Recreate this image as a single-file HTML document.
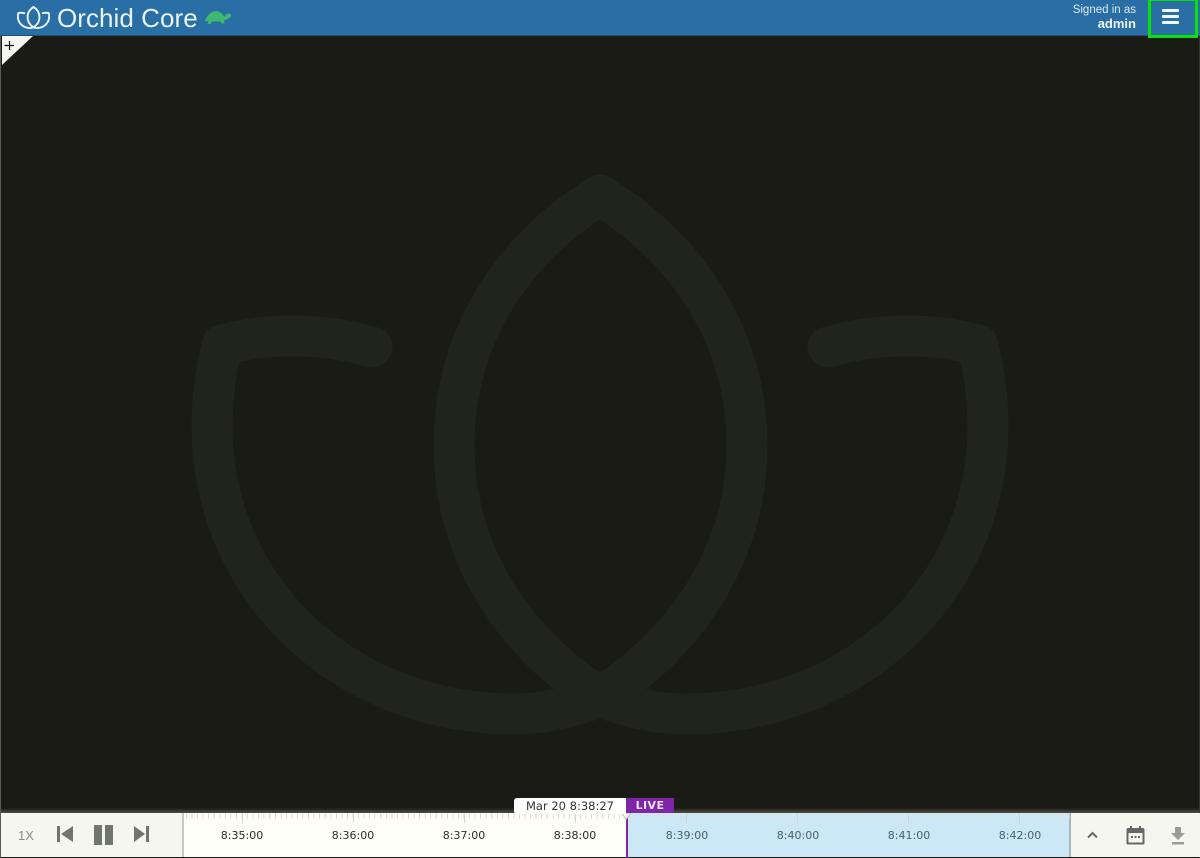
<!DOCTYPE html>
<html><head><meta charset="utf-8"><title>Orchid Core</title>
<style>
html,body{margin:0;padding:0;width:1200px;height:858px;overflow:hidden;background:#191b14;font-family:"Liberation Sans",sans-serif}
.a{position:absolute}
#hd{left:0;top:0;width:1200px;height:35px;background:#2a6ea6;border-bottom:1px solid #1d4f78;box-sizing:content-box}
#title{left:57px;top:1px;font-size:26px;line-height:34px;color:#e8f4f6;white-space:nowrap;letter-spacing:.05px}
#signed{right:64px;top:3px;text-align:right;font-size:11.5px;line-height:14px;color:#dbe9f0}
#signed b{font-size:13px;display:block;color:#f0f6f8}
#box{left:1148px;top:0;width:50px;height:38px;border:3px solid #08e008;box-sizing:border-box;border-top-width:1px}
.bar{left:1162px;width:17px;height:3px;background:#f2f6f4;border-radius:1px}
#ctl{left:1px;top:813px;width:182px;height:44px;background:#f5f7ef}
#tl{left:184px;top:813px;width:442px;height:44px;background:#fffff8}
#tb{left:628px;top:813px;width:442px;height:44px;background:#cce8f7}
#rc{left:1071px;top:813px;width:129px;height:44px;background:#f5f7ef}
.t{top:829px;width:80px;text-align:center;font:11px/14px "DejaVu Sans",sans-serif;color:#2c2c2c}
.b{color:#4c5c70}
.tick{top:813px;height:6px;left:184px;width:886px;background:repeating-linear-gradient(90deg,#dfdfd6 0,#dfdfd6 1px,transparent 1px,transparent 5.55px);background-position:2px 0}
.maj{top:813px;width:1px;height:10px;background:#d4d4cc}
</style></head><body>
<svg class="a" style="left:0;top:0" width="1200" height="858" viewBox="0 0 1200 858">
<g fill="none" stroke="#21241c" stroke-width="41" stroke-linecap="round" stroke-linejoin="round">
<path d="M372,347 C322,333 272,332 222,345 C216,372 212,398 212,425 C212,590 345,714 515,714 C545,714 575,706 600,697 C690,640 747,550 747,445 C747,340 690,250 600,195"/>
<path d="M828,347 C878,333 928,332 978,345 C984,372 988,398 988,425 C988,590 855,714 685,714 C655,714 625,706 600,697 C510,640 454,550 454,445 C454,340 510,250 600,195"/>
</g></svg>
<div class="a" style="left:0;top:36px;width:1px;height:822px;background:#5a5a5a"></div>
<div class="a" style="left:1199px;top:36px;width:1px;height:822px;background:#333"></div>

<div class="a" id="hd"></div>
<svg class="a" style="left:17px;top:6px" width="33" height="23" viewBox="192 173 816 560">
<g fill="none" stroke="#e8f4f6" stroke-width="48" stroke-linecap="round" stroke-linejoin="round">
<path d="M372,347 C322,333 272,332 222,345 C216,372 212,398 212,425 C212,590 345,714 515,714 C545,714 575,706 600,697 C690,640 747,550 747,445 C747,340 690,250 600,195"/>
<path d="M828,347 C878,333 928,332 978,345 C984,372 988,398 988,425 C988,590 855,714 685,714 C655,714 625,706 600,697 C510,640 454,550 454,445 C454,340 510,250 600,195"/>
</g></svg>
<div class="a" id="title">Orchid Core</div>
<svg class="a" style="left:204px;top:9px" width="28" height="16" viewBox="0 0 28 16">
<path fill="#3fb871" d="M1,12 C3,6 8,1.500 13,2 C17,2.500 19,6 20.500,8 C21.500,6.500 22,4.500 24.500,4.500 C26.500,4.500 27.500,6 27,7.200 C26,9 22.500,10.500 20,11.500 L20.500,14.500 L17.500,14.500 L16.500,12.500 L8,12.500 L6.500,15 L3.500,15 L4.500,12.500 Z"/>
</svg>
<div class="a" id="signed">Signed in as<b>admin</b></div>
<div class="a" id="box"></div>
<div class="a bar" style="top:9px"></div><div class="a bar" style="top:15px"></div><div class="a bar" style="top:21px"></div>

<svg class="a" style="left:1px;top:35px" width="34" height="32"><path fill="#f6f6ee" d="M1,1H32L1,30Z"/><path stroke="#111" stroke-width="1.200" d="M3.500,10.500H13M8.500,6V15"/></svg>

<div class="a" style="left:1px;top:808px;width:1198px;height:5px;background:linear-gradient(#191b14,#4e5048)"></div>
<div class="a" id="ctl"></div>
<div class="a" style="left:182px;top:813px;width:3px;height:44px;background:#c9cac2"></div>
<div class="a" id="tl"></div>
<div class="a" id="tb"></div>
<div class="a" style="left:1069px;top:813px;width:3px;height:44px;background:#a9b4b8"></div>
<div class="a" id="rc"></div>
<div class="a tick"></div>
<div class="a maj" style="left:242px"></div><div class="a maj" style="left:353px"></div><div class="a maj" style="left:464px"></div><div class="a maj" style="left:575px"></div><div class="a maj" style="left:686px"></div><div class="a maj" style="left:797px"></div><div class="a maj" style="left:908px"></div><div class="a maj" style="left:1019px"></div>

<div class="a" style="left:18px;top:828px;font-size:13px;line-height:16px;color:#8b8d88">1X</div>
<svg class="a" style="left:50px;top:820px" width="110" height="32" viewBox="0 0 110 32">
<path fill="#72756e" d="M7,6H10V22H7ZM23,6V22L11,14Z"/>
<path fill="#72756e" d="M44,5H52V25H44ZM55,5H63V25H55Z"/>
<path fill="#72756e" d="M84,6V22L95,14ZM96,6H99V22H96Z"/>
</svg>
<svg class="a" style="left:1080px;top:822px" width="115" height="28" viewBox="0 0 115 28">
<path fill="none" stroke="#666" stroke-width="2" d="M8,15.500L12.500,11L17,15.500"/>
<path fill="#666" d="M48,6H50V4H52V6H59V4H61V6H63C64,6 64.500,7 64.500,8V21C64.500,22 64,22.500 63,22.500H48C47,22.500 46.500,22 46.500,21V8C46.500,7 47,6 48,6ZM48.500,11V20.500H62.500V11Z"/>
<path fill="#666" d="M51,14H53V16H51ZM54.500,14H56.500V16H54.500ZM58,14H60V16H58Z"/>
<path fill="#9a9c96" d="M95,5H101V11H105L98,18L91,11H95ZM92,20H104V22.500H92Z"/>
</svg>

<div class="a t" style="left:202px">8:35:00</div>
<div class="a t" style="left:313px">8:36:00</div>
<div class="a t" style="left:424px">8:37:00</div>
<div class="a t" style="left:535px">8:38:00</div>
<div class="a t b" style="left:647px">8:39:00</div>
<div class="a t b" style="left:758px">8:40:00</div>
<div class="a t b" style="left:869px">8:41:00</div>
<div class="a t b" style="left:980px">8:42:00</div>

<div class="a" style="left:625.500px;top:813px;width:2px;height:45px;background:#7d27a8"></div>
<svg class="a" style="left:621px;top:813px" width="12" height="8"><path fill="#fffff8" stroke="#bbb" d="M0,0H10L5.500,6Z"/></svg>
<div class="a" style="left:514px;top:798px;width:112px;height:16px;background:#fff;border-radius:3px 0 0 3px;text-align:center;font:11.500px/16px 'DejaVu Sans',sans-serif;color:#333">Mar 20 8:38:27</div>
<div class="a" style="left:626px;top:798px;width:48px;height:15px;background:#7d27a8;text-align:center;font:bold 11px/15px 'DejaVu Sans',sans-serif;letter-spacing:.4px;color:#efe3f5">LIVE</div>
</body></html>
